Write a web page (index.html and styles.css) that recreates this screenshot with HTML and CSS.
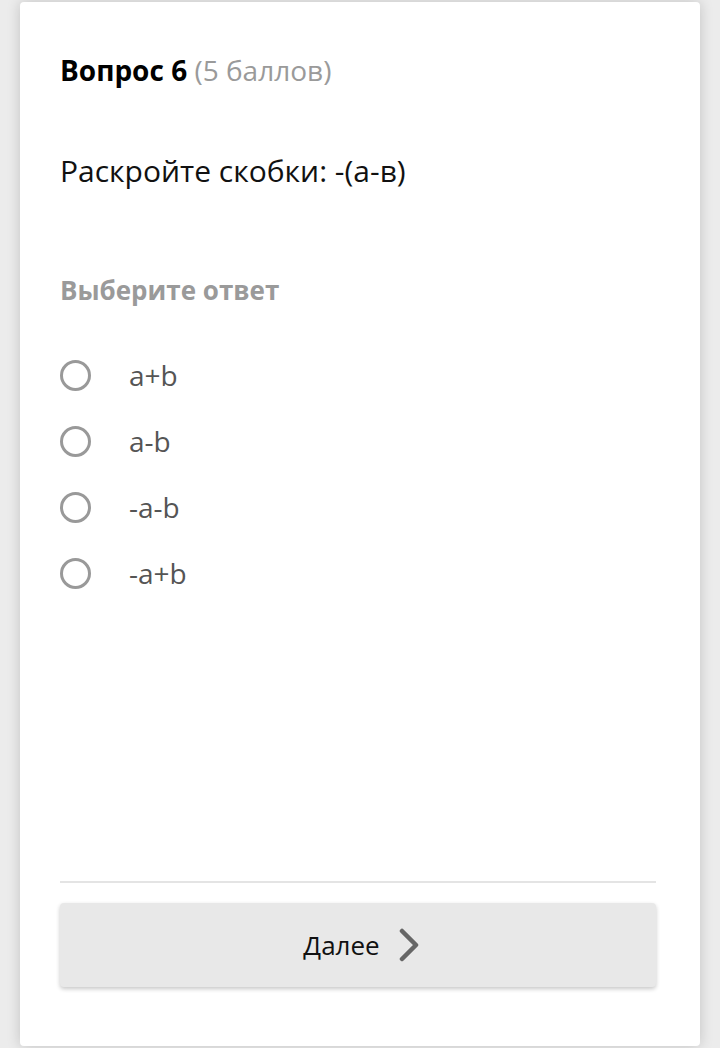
FILE: index.html
```html
<!DOCTYPE html>
<html lang="ru">
<head>
<meta charset="utf-8">
<link rel="stylesheet" href="styles.css">
</head>
<body>
<div class="card">
  <div class="content">
    <h1 class="title"><b>Вопрос 6</b> <span class="points">(5 баллов)</span></h1>
    <p class="question">Раскройте скобки: -(а-в)</p>
    <p class="hint">Выберите ответ</p>
    <ul class="options">
      <li class="option"><span class="radio"></span><span class="label">a+b</span></li>
      <li class="option"><span class="radio"></span><span class="label">a-b</span></li>
      <li class="option"><span class="radio"></span><span class="label">-a-b</span></li>
      <li class="option"><span class="radio"></span><span class="label">-a+b</span></li>
    </ul>
  </div>
  <div class="footer">
    <hr class="divider">
    <button class="next">Далее
      <svg class="chev" width="22" height="34" viewBox="0 0 22 34"><path d="M3 3 L17 17 L3 31" fill="none" stroke="#666" stroke-width="4.5" stroke-linecap="round" stroke-linejoin="round"/></svg>
    </button>
  </div>
</div>
</body>
</html>
```
FILE: styles.css
```css
html, body {
  margin: 0;
  padding: 0;
  height: 100%;
}
body {
  background: #ececec;
  font-family: "Open Sans", "Noto Sans", sans-serif;
  display: flex;
  justify-content: center;
  padding-top: 2px;
  box-sizing: border-box;
  height: 1048px;
  overflow: hidden;
}
.card {
  width: 680px;
  height: 1044px;
  background: #fff;
  border-radius: 4px;
  box-shadow: 0 0 14px rgba(0,0,0,0.18);
  box-sizing: border-box;
  padding: 0 44px 0 40px;
  display: flex;
  flex-direction: column;
}
.content {
  flex: 1;
}
.title {
  margin: 50px 0 0;
  font-size: 28px;
  font-weight: 400;
  line-height: 36px;
  color: #000;
}
.title b {
  font-weight: 700;
}
.points {
  color: #9a9a9a;
}
.question {
  margin: 64px 0 0;
  font-size: 30px;
  line-height: 38px;
  color: #111;
}
.hint {
  margin: 83px 0 0;
  font-size: 26px;
  font-weight: 700;
  line-height: 34px;
  color: #9a9a9a;
}
.options {
  list-style: none;
  margin: 35px 0 0;
  padding: 0;
}
.option {
  display: flex;
  align-items: center;
  height: 66px;
}
.radio {
  width: 25px;
  height: 25px;
  border: 3px solid #999;
  border-radius: 50%;
  flex: none;
}
.label {
  margin-left: 38px;
  font-size: 28px;
  color: #555;
  line-height: 34px;
}
.footer {
  padding-bottom: 59px;
}
.divider {
  border: 0;
  border-top: 2px solid #e4e4e4;
  margin: 0 0 20px;
}
.next {
  width: 100%;
  height: 84px;
  background: #e8e8e8;
  border: 0;
  border-radius: 4px;
  box-shadow: 0 2px 4px rgba(0,0,0,0.22);
  font-family: "Open Sans", "Noto Sans", sans-serif;
  font-size: 26px;
  color: #111;
  display: flex;
  align-items: center;
  justify-content: center;
  gap: 19px;
  padding: 0 0 0 8px;
}
.chev {
  display: block;
}
```
